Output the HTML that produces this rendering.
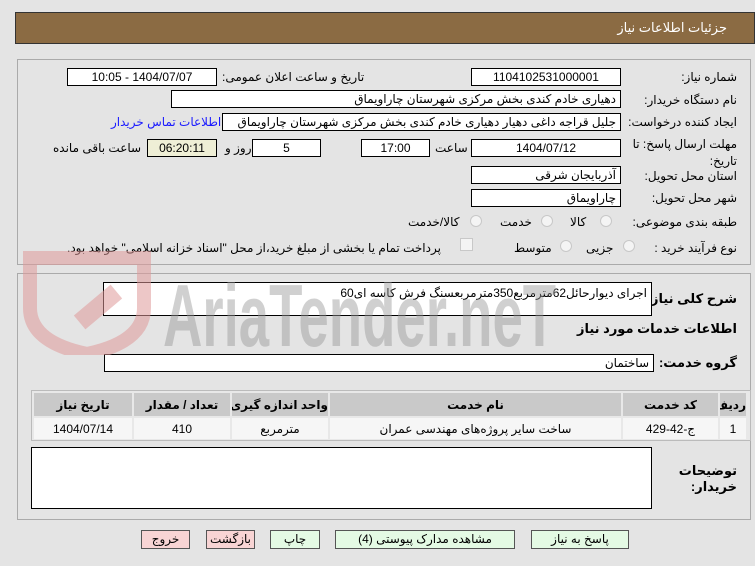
<!DOCTYPE html>
<html><head><meta charset="utf-8"><style>
*{box-sizing:border-box;margin:0;padding:0}
body{width:755px;height:566px;background:#e4e4e4;font-family:"Liberation Sans","DejaVu Sans",sans-serif;font-size:12px;color:#000;position:relative;overflow:hidden}
.a{position:absolute;white-space:nowrap}
.f{position:absolute;background:#fff;border:1px solid #000;height:18px;line-height:16px;padding:0 4px;direction:rtl;white-space:nowrap;overflow:hidden}
.c{text-align:center}
.l{direction:rtl;text-align:right}
.panel{position:absolute;border:1px solid #aaa}
.rad{position:absolute;width:12px;height:12px;border-radius:50%;border:1px solid #c8c8c8;background:#f4f4f4}
.btn{position:absolute;height:19px;border:1px solid #555;text-align:center;line-height:17px;font-size:12px}
table{border-collapse:separate;border-spacing:2px;table-layout:fixed}
td{overflow:hidden;white-space:nowrap}
</style></head><body>
<div class="a" style="left:15px;top:12px;width:740px;height:32px;background:#8b6b43;border:1px solid #333"></div>
<div class="a l" style="right:28px;top:20px;color:#fff;font-size:13px">جزئیات اطلاعات نیاز</div>

<div class="panel" style="left:17px;top:59px;width:734px;height:206px"></div>
<div class="panel" style="left:17px;top:273px;width:734px;height:247px"></div>

<div class="a l" style="right:18px;top:70px">شماره نیاز:</div>
<div class="f c" style="left:471px;top:68px;width:150px">1104102531000001</div>
<div class="a l" style="left:222px;top:70px">تاریخ و ساعت اعلان عمومی:</div>
<div class="f c" style="left:67px;top:68px;width:150px">1404/07/07 - 10:05</div>

<div class="a l" style="right:18px;top:93px">نام دستگاه خریدار:</div>
<div class="f" style="left:171px;top:90px;width:450px">دهیاری خادم کندی بخش مرکزی شهرستان چاراویماق</div>

<div class="a l" style="right:18px;top:115px">ایجاد کننده درخواست:</div>
<div class="f" style="left:222px;top:113px;width:399px">جلیل قراجه داغی دهیار دهیاری خادم کندی بخش مرکزی شهرستان چاراویماق</div>
<div class="a l" style="left:111px;top:115px;color:#1a1aff">اطلاعات تماس خریدار</div>

<div class="a l" style="right:18px;top:137px">مهلت ارسال پاسخ: تا</div>
<div class="a l" style="right:18px;top:154px">تاریخ:</div>
<div class="f c" style="left:471px;top:139px;width:150px">1404/07/12</div>
<div class="a" style="left:435px;top:141px">ساعت</div>
<div class="f c" style="left:361px;top:139px;width:69px">17:00</div>
<div class="f c" style="left:252px;top:139px;width:69px">5</div>
<div class="a" style="left:225px;top:141px">روز و</div>
<div class="f c" style="left:147px;top:139px;width:70px;background:#efefd6">06:20:11</div>
<div class="a" style="left:53px;top:141px">ساعت باقی مانده</div>

<div class="a l" style="right:18px;top:169px">استان محل تحویل:</div>
<div class="f" style="left:471px;top:166px;width:150px">آذربایجان شرقی</div>
<div class="a l" style="right:18px;top:191px">شهر محل تحویل:</div>
<div class="f" style="left:471px;top:189px;width:150px">چاراویماق</div>

<div class="a l" style="right:18px;top:215px">طبقه بندی موضوعی:</div>
<div class="rad" style="left:600px;top:215px"></div><div class="a" style="left:570px;top:215px">کالا</div>
<div class="rad" style="left:541px;top:215px"></div><div class="a" style="left:500px;top:215px">خدمت</div>
<div class="rad" style="left:470px;top:215px"></div><div class="a" style="left:408px;top:215px">کالا/خدمت</div>

<div class="a l" style="right:18px;top:241px">نوع فرآیند خرید :</div>
<div class="rad" style="left:623px;top:240px"></div><div class="a" style="left:586px;top:241px">جزیی</div>
<div class="rad" style="left:560px;top:240px"></div><div class="a" style="left:514px;top:241px">متوسط</div>
<div class="a" style="left:460px;top:238px;width:13px;height:13px;border:1px solid #c8c8c8;background:#f4f4f4"></div>
<div class="a l" style="left:67px;top:241px">پرداخت تمام یا بخشی از مبلغ خرید،از محل "اسناد خزانه اسلامی" خواهد بود.</div>

<div class="a l" style="right:18px;top:291px;font-weight:bold;font-size:13px">شرح کلی نیاز:</div>
<div class="f" style="left:103px;top:282px;width:549px;height:34px;background:#fff;padding-top:2px">اجرای دیوارحائل62مترمربع350مترمربعسنگ فرش کاسه ای60</div>
<div class="a l" style="right:18px;top:321px;font-weight:bold;font-size:13px">اطلاعات خدمات مورد نیاز</div>
<div class="a l" style="right:18px;top:355px;font-weight:bold;font-size:13px">گروه خدمت:</div>
<div class="f" style="left:104px;top:354px;width:550px">ساختمان</div>

<div class="a" style="left:31px;top:390px;width:720px;height:51px;border:1px solid #bbb;background:#e8e8e8">
<table style="width:716px;direction:rtl;font-size:12px">
<tr style="background:#c9c9c9;font-weight:bold;height:23px;text-align:center"><td style="width:26px">ردیف</td><td style="width:95px">کد خدمت</td><td>نام خدمت</td><td style="width:96px">واحد اندازه گیری</td><td style="width:96px">تعداد / مقدار</td><td style="width:98px">تاریخ نیاز</td></tr>
<tr style="background:#f6f6f6;height:21px;text-align:center"><td>1</td><td>ج-42-429</td><td>ساخت سایر پروژه‌های مهندسی عمران</td><td>مترمربع</td><td>410</td><td>1404/07/14</td></tr>
</table></div>

<div class="f" style="left:31px;top:447px;width:621px;height:62px"></div>
<div class="a l" style="right:18px;top:463px;font-weight:bold;font-size:13px">توضیحات</div>
<div class="a l" style="right:18px;top:479px;font-weight:bold;font-size:13px">خریدار:</div>

<!-- watermark on top -->
<svg class="a" style="left:22px;top:250px;opacity:0.55" width="130" height="105" viewBox="0 0 130 105"><path d="M8 8 L122 8 L122 58 Q122 92 65 104 Q8 92 8 58 Z" fill="none" stroke="#e09a9a" stroke-width="14"/><rect x="52" y="48" width="48" height="18" fill="#e09a9a" transform="rotate(-40 76 57)"/></svg>
<div class="a" style="left:163px;top:272px;font-size:88px;line-height:88px;font-weight:bold;color:rgba(150,150,150,0.45);transform:scaleX(0.62);transform-origin:left top">AriaTender.neT</div>

<div class="btn" style="left:141px;top:530px;width:49px;background:#f8d4d4">خروج</div>
<div class="btn" style="left:206px;top:530px;width:49px;background:#f8d4d4">بازگشت</div>
<div class="btn" style="left:270px;top:530px;width:50px;background:#e4fae4">چاپ</div>
<div class="btn" style="left:335px;top:530px;width:180px;background:#e4fae4">مشاهده مدارک پیوستی (4)</div>
<div class="btn" style="left:531px;top:530px;width:98px;background:#e4fae4">پاسخ به نیاز</div>
</body></html>
